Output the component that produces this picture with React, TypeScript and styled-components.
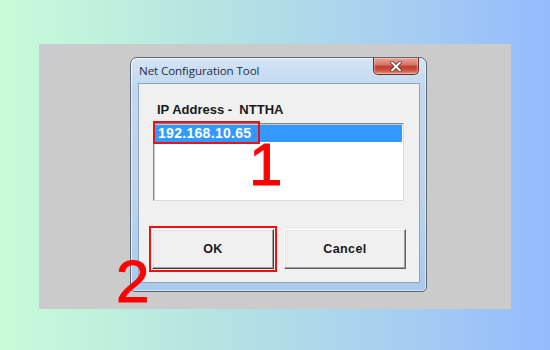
import React from "react";
import styled, { createGlobalStyle } from "styled-components";

const Global = createGlobalStyle`
  html, body { margin: 0; padding: 0; }
  body {
    width: 550px;
    height: 350px;
    overflow: hidden;
    background: linear-gradient(90deg, #c8fcd9 0%, #b4e3e2 40%, #a9d0f0 70%, #94bbfc 100%);
    font-family: "Liberation Sans", Arial, sans-serif;
  }
`;

const Stage = styled.div`
  width: 550px;
  height: 350px;
  box-sizing: border-box;
  padding: 44px 0 0 39px;
`;

const Panel = styled.div`
  position: relative;
  width: 472px;
  height: 265px;
  box-sizing: border-box;
  background: #cbcbcb;
  padding: 13px 0 0 91px;
`;

const Window = styled.div`
  width: 297px;
  height: 235px;
  box-sizing: border-box;
  border: 1px solid #5e6873;
  border-radius: 7px 7px 5px 5px;
  background: linear-gradient(180deg, #d4e5f6 0%, #c3d8ef 12%, #bcd3ec 60%, #a9c9ee 100%);
  box-shadow: inset 1px 1px 0 rgba(255, 255, 255, 0.7), inset -1px -1px 0 rgba(255, 255, 255, 0.5);
  display: flex;
  flex-direction: column;
  padding: 0 6px 8px 7px;
`;

const TitleBar = styled.div`
  height: 25px;
  flex: 0 0 25px;
  display: flex;
  justify-content: space-between;
  align-items: flex-start;
  padding-left: 1px;
`;

const Title = styled.span`
  font-family: "Open Sans", "Noto Sans", sans-serif;
  font-size: 11.6px;
  color: #1f2d3d;
  line-height: 25px;
  letter-spacing: -0.1px;
`;

const CloseButton = styled.div`
  width: 46px;
  height: 17px;
  box-sizing: border-box;
  margin-right: 1px;
  border: 1px solid #6b2c27;
  border-top: none;
  border-radius: 0 0 5px 5px;
  background: linear-gradient(180deg, #eaa596 0%, #d9776a 40%, #c2392d 55%, #cf5a4b 80%, #e29a86 100%);
  box-shadow: inset 0 0 0 1px rgba(255, 210, 200, 0.5);
  display: flex;
  align-items: center;
  justify-content: center;
`;

const Client = styled.div`
  flex: 1;
  background: #f0f0f0;
  border: 1px solid #8fa4bd;
  display: flex;
  flex-direction: column;
`;

const Label = styled.div`
  margin: 18px 0 0 18px;
  font-size: 13px;
  font-weight: 700;
  line-height: 16px;
  color: #1a1a1a;
  white-space: pre;
`;

const ListBox = styled.div`
  position: relative;
  margin: 5px 0 0 14px;
  width: 251px;
  height: 78px;
  box-sizing: border-box;
  background: #ffffff;
  border-top: 1px solid #828790;
  border-left: 1px solid #828790;
  border-right: 1px solid #dcdcdc;
  border-bottom: 1px solid #dcdcdc;
  box-shadow: inset 1px 1px 0 #c9c9c9;
  padding: 1px 1px 0 1px;
`;

const ListRow = styled.div<{ $selected?: boolean }>`
  height: 17px;
  line-height: 17px;
  padding-left: 3px;
  font-size: 14px;
  font-weight: 700;
  letter-spacing: 0.3px;
  color: ${(p) => (p.$selected ? "#ffffff" : "#000000")};
  background: ${(p) => (p.$selected ? "#3399ff" : "transparent")};
`;

const RowMark = styled.div`
  position: absolute;
  left: -1px;
  top: -3px;
  width: 107px;
  height: 23px;
  box-sizing: border-box;
  border: 2px solid #ee1111;
`;

const ButtonRow = styled.div`
  display: flex;
  gap: 10px;
  margin: 28px 0 0 13px;
`;

const Focus = styled.div`
  margin: -3px;
  padding: 1px;
  border: 2px solid #ee1111;
  display: flex;
`;

const Button = styled.div<{ $default?: boolean }>`
  width: 122px;
  height: 40px;
  box-sizing: border-box;
  background: #f0f0f0;
  border-top: 1px solid #ffffff;
  border-left: 1px solid #ffffff;
  border-right: 1px solid ${(p) => (p.$default ? "#404040" : "#5f5f5f")};
  border-bottom: 1px solid ${(p) => (p.$default ? "#404040" : "#5f5f5f")};
  box-shadow: inset -1px -1px 0 #a0a0a0, inset 1px 1px 0 #e3e3e3;
  display: flex;
  align-items: center;
  justify-content: center;
  font-size: 12.5px;
  font-weight: 700;
  letter-spacing: 0.4px;
  color: #1a1a1a;
`;

const Step = styled.div<{ $left: number; $top: number }>`
  position: absolute;
  left: ${(p) => p.$left}px;
  top: ${(p) => p.$top}px;
  font-family: "Liberation Sans", Arial, sans-serif;
  font-size: 60px;
  line-height: 1;
  color: #ff0000;
  -webkit-text-stroke: 1px #ff0000;
`;

export default function App() {
  return (
    <>
      <Global />
      <Stage>
        <Panel>
          <Window>
            <TitleBar>
              <Title>Net Configuration Tool</Title>
              <CloseButton>
                <svg width="12" height="11" viewBox="0 0 12 11">
                  <path d="M2 1.5 L10 9.5 M10 1.5 L2 9.5" stroke="#5a2a26" strokeWidth="3.6" strokeLinecap="round" />
                  <path d="M2 1.5 L10 9.5 M10 1.5 L2 9.5" stroke="#ffffff" strokeWidth="2" strokeLinecap="round" />
                </svg>
              </CloseButton>
            </TitleBar>
            <Client>
              <Label>{"IP Address -  NTTHA"}</Label>
              <ListBox>
                <ListRow $selected>192.168.10.65</ListRow>
                <RowMark />
              </ListBox>
              <ButtonRow>
                <Focus>
                  <Button $default>OK</Button>
                </Focus>
                <Button>Cancel</Button>
              </ButtonRow>
            </Client>
          </Window>
          <Step $left={210} $top={91}>1</Step>
          <Step $left={77} $top={208}>2</Step>
        </Panel>
      </Stage>
    </>
  );
}
